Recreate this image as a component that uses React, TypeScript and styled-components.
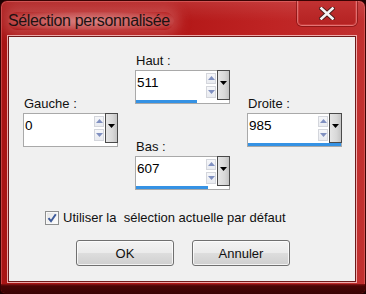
import React from "react";
import styled, { createGlobalStyle } from "styled-components";

const Global = createGlobalStyle`
  html, body { margin: 0; padding: 0; background: #1c0202; }
  body { width: 366px; height: 294px; overflow: hidden; font-family: "Liberation Sans", Arial, sans-serif; }
`;

const Window = styled.div`
  width: 366px;
  height: 294px;
  box-sizing: border-box;
  display: flex;
  flex-direction: column;
  border-radius: 7px 7px 5px 5px;
  border: 1px solid #3a0303;
  background:
    linear-gradient(180deg, rgba(255,255,255,0.10) 0px, rgba(255,255,255,0) 20px),
    linear-gradient(90deg, #a81414 0%, #b21616 45%, #bf2424 75%, #c13030 100%);
  box-shadow: inset 0 0 0 1px rgba(255, 150, 150, 0.35);
  overflow: hidden;
`;

const TitleBar = styled.div`
  height: 35px;
  display: flex;
  align-items: flex-start;
  justify-content: space-between;
  padding-left: 7px;
  padding-right: 8px;
  flex-shrink: 0;
`;

const Title = styled.div`
  margin-top: 11px;
  font-size: 16px;
  line-height: 18px;
  letter-spacing: -0.35px;
  color: #1c1212;
  padding: 0 4px 0 0;
  border-radius: 14px;
  background: radial-gradient(ellipse at 50% 50%, rgba(226, 150, 150, 0.85) 0%, rgba(214, 120, 120, 0.6) 60%, rgba(190, 60, 60, 0) 100%);
  box-shadow: 0 0 12px 6px rgba(214, 115, 115, 0.45);
`;

const CloseButton = styled.div`
  width: 60px;
  height: 27px;
  margin-top: -2px;
  box-sizing: border-box;
  border: 1px solid rgba(255, 170, 170, 0.55);
  border-top: none;
  border-radius: 0 0 5px 5px;
  background: linear-gradient(180deg, #c23434 0%, #bb2a2a 50%, #b52222 100%);
  box-shadow: 0 0 0 1px rgba(90, 0, 0, 0.45), inset 0 0 0 1px rgba(255, 120, 120, 0.25);
  display: flex;
  align-items: center;
  justify-content: center;
  padding-top: 2px;
`;

const Client = styled.div`
  margin: 0 9px 0 7px;
  height: 246px;
  box-sizing: border-box;
  background: #f0f0f0;
  border: 1px solid #6e1a1a;
  box-shadow: 0 0 0 1px rgba(255, 215, 215, 0.75);
  display: flex;
  flex-direction: column;
  padding: 15px 0 0 14px;
`;

const FieldsGrid = styled.div`
  display: grid;
  grid-template-columns: repeat(3, 95px);
  column-gap: 17px;
  align-items: center;
  height: 138px;
`;

const CenterColumn = styled.div`
  display: flex;
  flex-direction: column;
  gap: 35px;
`;

const Field = styled.div`
  display: flex;
  flex-direction: column;
`;

const Label = styled.div`
  font-size: 13px;
  line-height: 15px;
  color: #111;
  padding-left: 1px;
  margin-bottom: 2px;
`;

const SpinBox = styled.div`
  width: 95px;
  height: 34px;
  box-sizing: border-box;
  border: 1px solid #a9a9a9;
  background: #fff;
  display: flex;
  flex-direction: column;
`;

const SpinRow = styled.div`
  display: flex;
  height: 29px;
`;

const Value = styled.div`
  flex: 1;
  font-size: 13.5px;
  line-height: 15px;
  padding: 4px 0 0 1px;
  color: #000;
`;

const Spinner = styled.div`
  width: 10px;
  display: flex;
  flex-direction: column;
  gap: 2px;
  padding: 2px 1px 2px 0;
`;

const SpinHalf = styled.div`
  flex: 1;
  box-sizing: border-box;
  border: 1px solid #d4d6dc;
  background: linear-gradient(180deg, #f6f7fa, #e9ebf0);
  display: flex;
  align-items: center;
  justify-content: center;
`;

const DropButton = styled.div`
  width: 13px;
  margin: -1px -1px 0 0;
  height: 30px;
  box-sizing: border-box;
  border: 1px solid #4a4a4a;
  background: linear-gradient(90deg, #e6e6e6 0%, #d8d8d8 60%, #c4c4c4 100%);
  display: flex;
  justify-content: center;
  padding-top: 10px;
`;

const BarTrack = styled.div`
  flex: 1;
  padding: 0 0 1px 0;
  display: flex;
  align-items: flex-end;
`;

const Bar = styled.div`
  height: 3px;
  background: #3592e4;
`;

const CheckRow = styled.label`
  display: flex;
  align-items: center;
  gap: 4px;
  margin: 20px 0 0 22px;
  font-size: 13px;
  line-height: 15px;
  color: #111;
  white-space: pre;
`;

const CheckBox = styled.div`
  width: 14px;
  height: 14px;
  box-sizing: border-box;
  border: 1px solid #8e8f8f;
  background: linear-gradient(135deg, #e2e2e2 0%, #f4f4f4 60%, #ffffff 100%);
  box-shadow: inset 0 0 0 1px #f8f8f8;
  display: flex;
  align-items: center;
  justify-content: center;
`;

const ButtonRow = styled.div`
  display: flex;
  gap: 18px;
  margin: 15px 0 0 53px;
`;

const PushButton = styled.div`
  width: 98px;
  height: 26px;
  box-sizing: border-box;
  border: 1px solid #707070;
  border-radius: 3px;
  background: linear-gradient(180deg, #f3f3f3 0%, #ebebeb 48%, #dddddd 52%, #cfcfcf 100%);
  box-shadow: inset 0 0 0 1px rgba(255, 255, 255, 0.75);
  display: flex;
  align-items: center;
  justify-content: center;
  font-size: 13px;
  color: #111;
`;

const BottomFrame = styled.div`
  flex: 1;
  margin-top: 2px;
  background: linear-gradient(180deg, #8a1414 0px, #4a0505 2px, #3a0404 9px, #7a1a1a 10px, #2a0202 11px);
`;

const Tri = ({ up, color }: { up?: boolean; color: string }) => (
  <svg width="7" height="4" viewBox="0 0 7 4">
    <polygon points={up ? "0,4 7,4 3.5,0" : "0,0 7,0 3.5,4"} fill={color} />
  </svg>
);

type FieldData = { label: string; value: number; bar: boolean };

const MAX = 780;

const NumberField = ({ label, value, bar }: FieldData) => (
  <Field>
    <Label>{label}</Label>
    <SpinBox>
      <SpinRow>
        <Value>{value}</Value>
        <Spinner>
          <SpinHalf>
            <Tri up color="#8090c0" />
          </SpinHalf>
          <SpinHalf>
            <Tri color="#8090c0" />
          </SpinHalf>
        </Spinner>
        <DropButton>
          <Tri color="#000" />
        </DropButton>
      </SpinRow>
      <BarTrack>
        {bar && <Bar style={{ width: `${Math.min(1, value / MAX) * 100}%` }} />}
      </BarTrack>
    </SpinBox>
  </Field>
);

export default function App() {
  return (
    <>
      <Global />
      <Window>
        <TitleBar>
          <Title>Sélection personnalisée</Title>
          <CloseButton>
            <svg width="16" height="13" viewBox="0 0 16 13">
              <path d="M2.5 1.5 L13.5 11.5 M13.5 1.5 L2.5 11.5" stroke="#4a1a1a" strokeWidth="4.4" strokeLinecap="square" />
              <path d="M2.5 1.5 L13.5 11.5 M13.5 1.5 L2.5 11.5" stroke="#f4f4f4" strokeWidth="2.6" strokeLinecap="square" />
            </svg>
          </CloseButton>
        </TitleBar>
        <Client>
          <FieldsGrid>
            <NumberField label="Gauche :" value={0} bar={false} />
            <CenterColumn>
              <NumberField label="Haut :" value={511} bar />
              <NumberField label="Bas :" value={607} bar />
            </CenterColumn>
            <NumberField label="Droite :" value={985} bar />
          </FieldsGrid>
          <CheckRow>
            <CheckBox>
              <svg width="10" height="10" viewBox="0 0 10 10">
                <path d="M1.5 5.2 L4 8.2 L8.8 1.2" fill="none" stroke="#3d5a9a" strokeWidth="2" />
              </svg>
            </CheckBox>
            {"Utiliser la  sélection actuelle par défaut"}
          </CheckRow>
          <ButtonRow>
            <PushButton>OK</PushButton>
            <PushButton>Annuler</PushButton>
          </ButtonRow>
        </Client>
        <BottomFrame />
      </Window>
    </>
  );
}
